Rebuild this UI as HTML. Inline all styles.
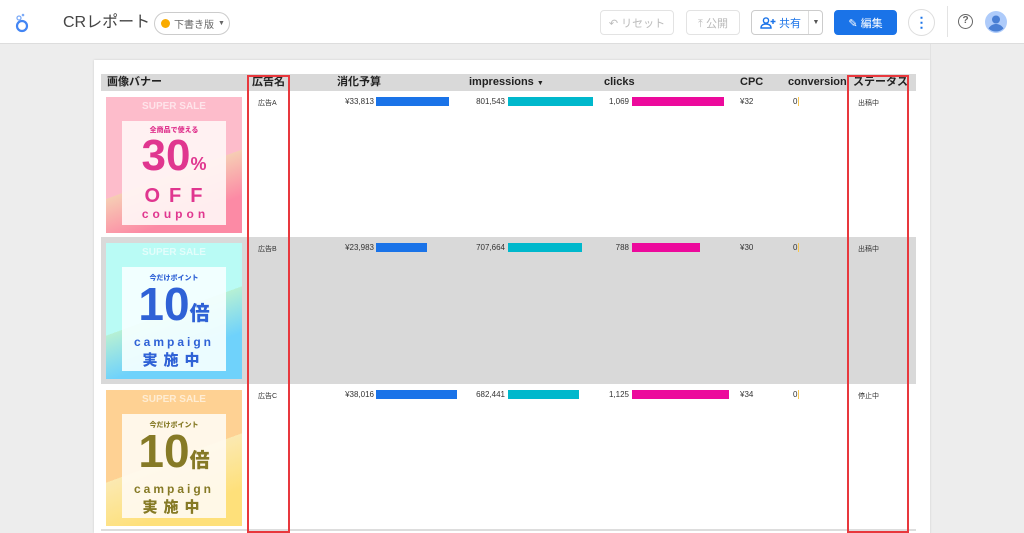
<!DOCTYPE html><html><head><meta charset="utf-8"><style>
*{box-sizing:border-box;margin:0;padding:0;white-space:nowrap}
body{width:1024px;height:533px;overflow:hidden;background:#ededed;font-family:"Liberation Sans","Noto Sans CJK JP",sans-serif;position:relative;color:#222}
.a{position:absolute}
.hdr{left:0;top:0;width:1024px;height:44px;background:#fff;border-bottom:1px solid #ddd}
.btn{position:absolute;border:1px solid #e3e3e3;border-radius:4px;height:25px;font-size:11px;color:#bbb;display:flex;align-items:center;justify-content:center}
.th{font-size:11px;font-weight:bold;top:75px;color:#222;line-height:15px}
.v{font-size:8px;color:#333;top:97px;line-height:10px}
.bar{position:absolute;height:9px}
.st{font-size:7px;color:#333;line-height:9px}
.ban{position:absolute;width:136px;height:136px;overflow:hidden}
.ban .in{position:absolute;left:16px;top:24px;width:104px;height:104px;text-align:center}
.ss{position:absolute;top:4px;width:100%;text-align:center;color:rgba(255,255,255,.6);font-weight:900;font-size:10px;font-family:"Liberation Sans",sans-serif}
</style></head><body>
<div class="a hdr"></div>
<svg class="a" style="left:14px;top:13px" width="16" height="20" viewBox="0 0 16 20"><circle cx="8" cy="13" r="5" fill="none" stroke="#4285f4" stroke-width="2.2"/><circle cx="5" cy="5" r="2" fill="none" stroke="#7baaf7" stroke-width="1.3"/><circle cx="9" cy="2" r="1.3" fill="#7baaf7"/></svg>
<div class="a" style="left:63px;top:12px;font-size:16px;color:#444;line-height:22px">CRレポート</div>
<div class="a" style="left:154px;top:12px;width:76px;height:23px;border:1px solid #ccc;border-radius:12px;font-size:10px;color:#666;display:flex;align-items:center;padding-left:6px"><span style="width:9px;height:9px;border-radius:50%;background:#f9ab00;display:inline-block;margin-right:4px"></span>下書き版 <span style="font-size:7px;margin-left:4px">▼</span></div>
<div class="btn" style="left:600px;top:10px;width:74px">↶ リセット</div>
<div class="btn" style="left:686px;top:10px;width:54px">⤒ 公開</div>
<div class="btn" style="left:751px;top:10px;width:72px;color:#1a73e8;border-color:#ccc;justify-content:flex-start;padding-left:8px"><svg width="16" height="12" viewBox="0 0 16 12"><circle cx="6" cy="3.5" r="2.6" fill="none" stroke="#1a73e8" stroke-width="1.4"/><path d="M1 11c0-3 2.5-4 5-4s5 1 5 4z" fill="none" stroke="#1a73e8" stroke-width="1.4"/><path d="M13 2v5M10.5 4.5h5" stroke="#1a73e8" stroke-width="1.4"/></svg>&nbsp;共有<span style="position:absolute;left:56px;top:0;height:23px;border-left:1px solid #ddd;width:15px;font-size:7px;color:#555;line-height:23px;text-align:center">▼</span></div>
<div class="btn" style="left:834px;top:10px;width:63px;background:#1a73e8;border-color:#1a73e8;color:#fff">✎ 編集</div>
<div class="a" style="left:908px;top:9px;width:27px;height:27px;border:1px solid #ddd;border-radius:50%;color:#1a73e8;font-weight:bold;font-size:14px;text-align:center;line-height:24px">⋮</div>
<div class="a" style="left:947px;top:6px;width:1px;height:31px;background:#e3e3e3"></div>
<div class="a" style="left:958px;top:14px;width:15px;height:15px;border:1.5px solid #666;border-radius:50%;font-size:10px;color:#666;text-align:center;line-height:12px;font-weight:bold">?</div>
<svg class="a" style="left:985px;top:11px" width="22" height="22" viewBox="0 0 22 22"><circle cx="11" cy="11" r="11" fill="#aecbfa"/><circle cx="11" cy="8.5" r="4" fill="#4a7fd4"/><path d="M3.5 17.5c2-3.5 5-4.5 7.5-4.5s5.5 1 7.5 4.5A11 11 0 0 1 3.5 17.5z" fill="#4a7fd4"/></svg>
<div class="a" style="left:94px;top:60px;width:836px;height:473px;background:#fff;box-shadow:0 0 2px #ccc"></div>
<div class="a" style="left:930px;top:44px;width:1px;height:489px;background:#e2e2e2"></div>
<div class="a" style="left:101px;top:74px;width:815px;height:17px;background:#d9d9d9"></div>
<div class="a" style="left:101px;top:237px;width:815px;height:147px;background:#d9d9d9"></div>
<div class="a" style="left:101px;top:529px;width:815px;height:2px;background:#ddd"></div>
<div class="a th" style="left:107px">画像バナー</div>
<div class="a th" style="left:252px">広告名</div>
<div class="a th" style="left:337px">消化予算</div>
<div class="a th" style="left:469px">impressions <span style="font-size:7px">▼</span></div>
<div class="a th" style="left:604px">clicks</div>
<div class="a th" style="left:740px">CPC</div>
<div class="a th" style="left:788px">conversion</div>
<div class="a th" style="left:853px">ステータス</div>

<div class="a" style="left:0;top:0">
<div class="a st" style="left:258px;top:99px">広告A</div>
<div class="a v" style="left:314px;width:60px;text-align:right">¥33,813</div><div class="bar" style="left:376px;top:97px;width:73px;background:#1a73e8"></div>
<div class="a v" style="left:445px;width:60px;text-align:right">801,543</div><div class="bar" style="left:508px;top:97px;width:85px;background:#00b8cc"></div>
<div class="a v" style="left:569px;width:60px;text-align:right">1,069</div><div class="bar" style="left:632px;top:97px;width:92px;background:#ec0a9c"></div>
<div class="a v" style="left:740px">¥32</div>
<div class="a v" style="left:793px">0</div><div class="bar" style="left:798px;top:97px;width:1px;background:#f9c74f"></div>
<div class="a st" style="left:858px;top:99px">出稿中</div>
</div>
<div class="a" style="left:0;top:146px">
<div class="a st" style="left:258px;top:99px">広告B</div>
<div class="a v" style="left:314px;width:60px;text-align:right">¥23,983</div><div class="bar" style="left:376px;top:97px;width:51px;background:#1a73e8"></div>
<div class="a v" style="left:445px;width:60px;text-align:right">707,664</div><div class="bar" style="left:508px;top:97px;width:74px;background:#00b8cc"></div>
<div class="a v" style="left:569px;width:60px;text-align:right">788</div><div class="bar" style="left:632px;top:97px;width:68px;background:#ec0a9c"></div>
<div class="a v" style="left:740px">¥30</div>
<div class="a v" style="left:793px">0</div><div class="bar" style="left:798px;top:97px;width:1px;background:#f9c74f"></div>
<div class="a st" style="left:858px;top:99px">出稿中</div>
</div>
<div class="a" style="left:0;top:293px">
<div class="a st" style="left:258px;top:99px">広告C</div>
<div class="a v" style="left:314px;width:60px;text-align:right">¥38,016</div><div class="bar" style="left:376px;top:97px;width:81px;background:#1a73e8"></div>
<div class="a v" style="left:445px;width:60px;text-align:right">682,441</div><div class="bar" style="left:508px;top:97px;width:71px;background:#00b8cc"></div>
<div class="a v" style="left:569px;width:60px;text-align:right">1,125</div><div class="bar" style="left:632px;top:97px;width:97px;background:#ec0a9c"></div>
<div class="a v" style="left:740px">¥34</div>
<div class="a v" style="left:793px">0</div><div class="bar" style="left:798px;top:97px;width:1px;background:#f9c74f"></div>
<div class="a st" style="left:858px;top:99px">停止中</div>
</div>

<div class="ban" style="left:106px;top:97px;background:linear-gradient(160deg,#fdbccb 55%,#f6cdb4 55%,#fc8aa5 80%)">
<div class="ss">SUPER SALE</div>
<div class="in" style="background:rgba(255,245,245,.92);color:#e0368f;font-weight:900">
<div style="font-size:7px;margin-top:4px">全商品で使える</div>
<div style="font-size:44px;line-height:42px;font-family:'Liberation Sans',sans-serif">30<span style="font-size:18px">%</span></div>
<div style="font-size:20px;letter-spacing:9px;line-height:22px;padding-left:8px">OFF</div>
<div style="font-size:12px;letter-spacing:4px;padding-left:3px">coupon</div>
</div></div>
<div class="ban" style="left:106px;top:243px;background:linear-gradient(160deg,#b9fbf5 50%,#b6f0d4 50%,#6fd2fb 75%)">
<div class="ss">SUPER SALE</div>
<div class="in" style="background:rgba(245,255,255,.92);color:#2f62d6;font-weight:900">
<div style="font-size:7px;margin-top:6px">今だけポイント</div>
<div style="font-size:46px;line-height:42px">10<span style="font-size:20px">倍</span></div>
<div style="font-size:12px;letter-spacing:3px">campaign</div>
<div style="font-size:15px;letter-spacing:6px">実施中</div>
</div></div>
<div class="ban" style="left:106px;top:390px;background:linear-gradient(160deg,#fed193 50%,#fbe9b1 50%,#fee07a 80%)">
<div class="ss">SUPER SALE</div>
<div class="in" style="background:rgba(255,250,240,.92);color:#867a26;font-weight:900">
<div style="font-size:7px;margin-top:6px">今だけポイント</div>
<div style="font-size:46px;line-height:42px">10<span style="font-size:20px">倍</span></div>
<div style="font-size:12px;letter-spacing:3px">campaign</div>
<div style="font-size:15px;letter-spacing:6px">実施中</div>
</div></div>

<div class="a" style="left:247px;top:75px;width:43px;height:458px;border:2px solid #e8383d"></div>
<div class="a" style="left:847px;top:75px;width:62px;height:458px;border:2px solid #e8383d"></div>
</body></html>
